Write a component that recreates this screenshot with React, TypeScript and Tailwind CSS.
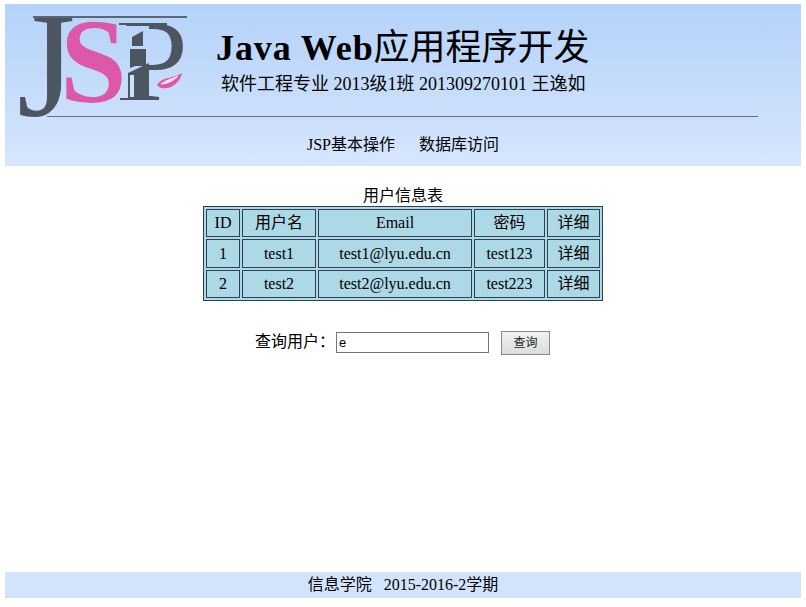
import React from 'react';

const serif = "font-['Liberation_Serif','Noto_Sans_CJK_SC',serif]";

const users = [
  { id: 1, name: 'test1', email: 'test1@lyu.edu.cn', password: 'test123' },
  { id: 2, name: 'test2', email: 'test2@lyu.edu.cn', password: 'test223' },
];

const cell = 'border border-[#2f4050] p-0 text-center font-normal';

const Logo: React.FC = () => (
  <svg className="absolute left-[12px] top-[12px] overflow-visible" width="172" height="103" viewBox="17 16 172 103">
    <defs>
      <linearGradient id="headerBg" gradientUnits="userSpaceOnUse" x1="0" y1="4" x2="0" y2="166">
        <stop offset="0" stopColor="#b4d2f9" />
        <stop offset="1" stopColor="#d6e6fd" />
      </linearGradient>
    </defs>
    <text x="17" y="116" fontFamily="Liberation Serif" fontSize="150" fill="#4c5660">J</text>
    <rect x="33" y="16" width="154" height="2" fill="#5b6670" />
    <text x="123" y="100" fontFamily="Liberation Serif" fontSize="116" fill="#4c5660">P</text>
    {/* lipstick in place of the stem of the P */}
    <rect x="119" y="26" width="30" height="73" fill="url(#headerBg)" />
    <text x="60" y="102" fontFamily="Liberation Serif" fontWeight="bold" fontSize="120" fill="#dd58a8">S</text>
    <rect x="119" y="23" width="48" height="2" fill="#4c5660" />
    <polygon points="132,37 143,31 143,46 132,46" fill="#4c5660" />
    <rect x="130" y="49" width="16" height="17" fill="#4c5660" />
    <polygon points="130,66 146,58 146,62 130,68" fill="#4c5660" />
    <polygon points="128,73 149,63 149,98 128,98" fill="#4c5660" />
    <rect x="130" y="75" width="4" height="22" fill="#cde2fb" />
    <rect x="120" y="98" width="37" height="2" fill="#4c5660" />
    <path d="M157 85 C163 76 170 80 182 73 C180 83 170 90 162 88 C160 88 158 86 157 85 Z" fill="#dd58a8" />
    <path d="M161 84 C167 84 173 81 178 76 C172 79 166 80 161 84 Z" fill="#f6e3f1" stroke="#f6e3f1" />
  </svg>
);

const App: React.FC = () => {
  return (
    <div className={`flex min-h-[607px] flex-col bg-white px-[5px] pt-[4px] pb-[9px] text-[16px] text-black ${serif}`}>
      <header className="relative h-[162px] bg-gradient-to-b from-[#b4d2f9] to-[#d6e6fd]">
        <Logo />
        <div className="pl-[211px] pt-[23px]">
          <h1 className="text-[36px] leading-[42px] font-bold">
            <span className="tracking-[0.9px]">Java Web</span>
            <span className="font-normal">应用程序开发</span>
          </h1>
          <p className="ml-[5px] mt-[3px] text-[18px] leading-[24px]">软件工程专业 2013级1班 201309270101 王逸如</p>
        </div>
        <div className="ml-[42px] mt-[20px] h-px w-[711px] bg-[#6b6f73]" />
        <nav className="mt-[19px] flex justify-center gap-[24px] leading-[18px]">
          <span>JSP基本操作</span>
          <span>数据库访问</span>
        </nav>
      </header>

      <main className="flex flex-1 flex-col items-center pt-[20px]">
        <div className="text-center leading-[20px]">用户信息表</div>
        <table className="w-[400px] table-fixed border-separate border-spacing-[2px] border border-[#2f4050] bg-[#add8e6] leading-[18px]">
          <colgroup>
            <col className="w-[34px]" />
            <col className="w-[74px]" />
            <col className="w-[154px]" />
            <col className="w-[71px]" />
            <col className="w-[53px]" />
          </colgroup>
          <thead>
            <tr className="h-[28px]">
              <th className={cell}>ID</th>
              <th className={cell}>用户名</th>
              <th className={cell}>Email</th>
              <th className={cell}>密码</th>
              <th className={cell}>详细</th>
            </tr>
          </thead>
          <tbody>
            {users.map((u, i) => (
              <tr key={u.id} className={i === 0 ? 'h-[29px]' : 'h-[28px]'}>
                <td className={cell}>{u.id}</td>
                <td className={cell}>{u.name}</td>
                <td className={cell}>{u.email}</td>
                <td className={cell}>{u.password}</td>
                <td className={cell}>详细</td>
              </tr>
            ))}
          </tbody>
        </table>

        <form className="mt-[30px] mr-px flex items-start">
          <label className="pt-px leading-[20px]">查询用户：</label>
          <input
            defaultValue="e"
            className="ml-px mt-px h-[21px] w-[153px] border border-[#767676] bg-white px-[2px] font-['Liberation_Sans'] text-[13px] text-black outline-none"
          />
          <button
            type="button"
            className="ml-[12px] h-[24px] w-[49px] border border-[#8a8a8a] bg-gradient-to-b from-[#f2f2f2] to-[#dcdcdc] pb-[2px] font-['Noto_Sans_CJK_SC',sans-serif] text-[12px] text-[#222]"
          >
            查询
          </button>
        </form>
      </main>

      <footer className="h-[26px] bg-[#d2e4fc] text-center leading-[25px]">
        信息学院&nbsp;&nbsp;&nbsp;2015-2016-2学期
      </footer>
    </div>
  );
};

export default App;
